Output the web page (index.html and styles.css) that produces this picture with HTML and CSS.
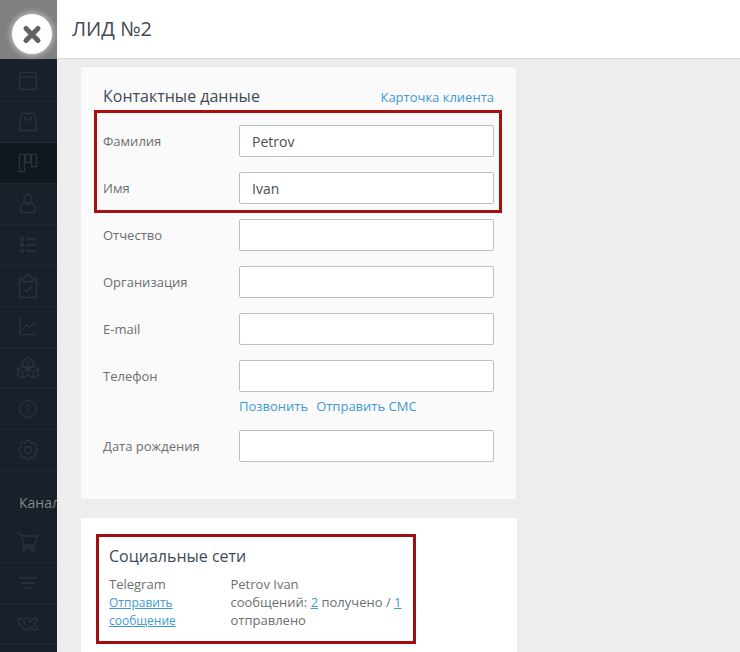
FILE: index.html
```html
<!DOCTYPE html>
<html lang="ru">
<head>
<meta charset="utf-8">
<title>ЛИД №2</title>
<link rel="stylesheet" href="styles.css">
</head>
<body>
<div class="app">
  <nav class="sidebar">
    <div class="sidebar-top">
      <button class="close" aria-label="Закрыть"><svg viewBox="0 0 40 40"><path d="M14 14.5L26 26.5M26 14.5L14 26.5"/></svg></button>
    </div>
    <a class="item"><svg viewBox="0 0 28 28"><rect x="5.5" y="5.5" width="17" height="17" rx="2"/><path d="M5.5 10H22.5"/></svg></a>
    <a class="item"><svg viewBox="0 0 28 28"><path d="M6.8 5.5H21.2L22.5 22.5H5.5ZM10.3 8C10.3 13.4 17.7 13.4 17.7 8"/></svg></a>
    <a class="item active"><svg viewBox="0 0 28 28"><path d="M5.5 5.5H10.5V22.5H5.5ZM11.5 5.5H16.5V13.5H11.5ZM17.5 5.5H22.5V17.5H17.5Z"/></svg></a>
    <a class="item"><svg viewBox="0 0 28 28"><circle cx="13.8" cy="8.5" r="4"/><path d="M10 12.8C7.5 13.5 6.5 15.5 6.5 19.5C6.5 21.5 7.5 22.5 9 22.5H18.5C20.2 22.5 21.2 21.5 21.2 19.5C21.2 15.5 20.2 13.5 17.6 12.8C15.5 14.5 12 14.5 10 12.8Z"/></svg></a>
    <a class="item"><svg viewBox="0 0 28 28"><circle cx="8" cy="8" r="1.5"/><circle cx="8" cy="14" r="1.5"/><circle cx="8" cy="20" r="1.5"/><path class="thick" d="M12 8H22M12 14H22M12 20H22"/></svg></a>
    <a class="item"><svg viewBox="0 0 28 28"><path d="M9 6.5H5.5V25.5H22.5V6.5H19M8.5 9.5V6.5L11 5.5C12 1.5 16 1.5 17 5.5L19.5 6.5V9.5ZM10 17L13 19.7L18 14"/></svg></a>
    <a class="item"><svg viewBox="0 0 28 28"><path class="thick" d="M6 5V21.5H22.5"/><path d="M9 16L12.5 12L15.5 14.5L21 9.5"/></svg></a>
    <a class="item"><svg viewBox="0 0 28 28"><path d="M14 3.5L19 6V11.5L14 14L9 11.5V6ZM9 6L14 8.5L19 6M14 8.5V14M8.5 12.5L14 15.5V21L8.5 24L3.5 21V15ZM3.5 15L8.5 18L14 15.5M8.5 18V24M19.5 12.5L24.5 15V21L19.5 24L14 21V15.5ZM14 15.5L19.5 18L24.5 15M19.5 18V24"/></svg></a>
    <a class="item"><svg viewBox="0 0 28 28"><circle cx="14" cy="14" r="8.5"/><text x="14" y="18.2">?</text></svg></a>
    <a class="item"><svg viewBox="0 0 28 28"><circle cx="14" cy="14" r="3.5"/><path d="M12 4.5H16L16.7 7.2L18.2 7.9L20.6 6.5L23 9.5L21 11.3L21.4 12.5L23.7 13V16L21 16.7L20.4 18L21.5 20.5L19 23L17 21.3L15.7 21.8L15 23.8H12.5L11.8 21.2L10.5 20.6L8 22L5.5 19.5L7 17.3L6.5 15.8L4.3 15V12.3L7 11.6L7.5 10.3L6.3 7.8L8.8 5.9L10.3 7.3L11.5 7Z"/></svg></a>
    <div class="section">Каналы</div>
    <a class="item"><svg viewBox="0 0 28 28"><path d="M3.5 5L7 5.8L10.5 19.5H21M8 8H23.5L21.3 16.5L10 17.3"/><circle cx="10.8" cy="21.3" r="1.7"/><circle cx="18.3" cy="21.3" r="1.7"/></svg></a>
    <a class="item"><svg viewBox="0 0 28 28"><path class="thick" d="M4 9H24M7 14H21M10 19H18"/></svg></a>
    <a class="item"><svg viewBox="0 0 28 28"><path d="M3.8 9.5Q3.7 8.5 5 8.5H7.5L10.7 13.8V10.5L9.8 9.2L11 8H14.5L15.5 9V12.8L18.8 8.5H23L24 9.5L19.8 14.5L24.2 18.8L23.5 20H20L16.2 17V19.5L15 20H13C8 19.5 5 14 3.8 9.5Z"/></svg></a>
    <div class="item tail"></div>
  </nav>
  <main class="main">
    <header class="header"><h1>ЛИД №2</h1></header>
    <div class="content">
      <section class="card contacts">
        <div class="card-head"><h2>Контактные данные</h2><a class="link">Карточка клиента</a></div>
        <div class="row"><label>Фамилия</label><input type="text" value="Petrov"></div>
        <div class="row"><label>Имя</label><input type="text" value="Ivan"></div>
        <div class="row"><label>Отчество</label><input type="text"></div>
        <div class="row"><label>Организация</label><input type="text"></div>
        <div class="row"><label>E-mail</label><input type="text"></div>
        <div class="row"><label>Телефон</label><input type="text"></div>
        <div class="actions"><a class="link">Позвонить</a><a class="link">Отправить СМС</a></div>
        <div class="row"><label>Дата рождения</label><input type="text"></div>
        <div class="mark"></div>
      </section>
      <section class="card social">
        <div class="social-box">
          <h2>Социальные сети</h2>
          <div class="cols">
            <div class="network">Telegram<a class="link under send">Отправить<br>сообщение</a></div>
            <div>Petrov Ivan<br>сообщений: <a class="link under">2</a> получено / <a class="link under">1</a><br>отправлено</div>
          </div>
        </div>
      </section>
    </div>
  </main>
</div>
</body>
</html>
```
FILE: styles.css
```css
* { box-sizing: border-box; }
body { margin: 0; font: 13px/18px "Open Sans", "Noto Sans", sans-serif; color: #6b6f72; }
h1, h2 { margin: 0; font-weight: 400; color: #3f4a56; }
.app { display: flex; height: 652px; overflow: hidden; background: #ededed; }

.sidebar { width: 57px; flex: none; background: #18202a; overflow: hidden; }
.sidebar-top { height: 61px; padding: 14px 0 0 12px; background: linear-gradient(#808080 59px, #18202a 59px); }
.close { display: block; width: 40px; height: 40px; padding: 0; border: 0; border-radius: 50%; background: #fff; box-shadow: 0 0 6px 1px rgba(255, 255, 255, .6); }
.close svg { display: block; width: 40px; height: 40px; fill: none; stroke: #606366; stroke-width: 5; stroke-linecap: round; }
.item { display: flex; justify-content: center; height: 41px; padding: 6px 1px 0 0; border-bottom: 1px solid #1f2730; }
.item svg { width: 28px; height: 28px; fill: none; stroke: #2a323b; stroke-width: 1.3; stroke-linejoin: round; }
.item .thick { stroke-width: 1.7; }
.item text { fill: #2a323b; stroke: none; font-size: 12px; font-weight: 600; text-anchor: middle; }
.item.active { background: #10171e; }
.item.tail { height: 10px; }
.section { height: 51px; padding: 23px 0 0 19px; font-size: 14px; white-space: nowrap; color: #858788; }

.main { flex: 1; min-width: 0; }
.header { height: 59px; padding: 15px 15px 0; background: #fff; border-bottom: 1px solid #d9d9d9; }
.header h1 { font-size: 20px; line-height: 28px; color: #414951; }
.content { padding: 7px 0 0 24px; }

.card h2 { font-size: 16px; line-height: 22px; }
.contacts { position: relative; width: 435px; height: 433px; padding: 18px 22px 0; background: #fafafa; border-top: 1px solid #e6e6e6; }
.card-head { display: flex; justify-content: space-between; align-items: baseline; height: 40px; }
.row { display: flex; align-items: center; height: 32px; margin-bottom: 15px; }
.row label { width: 136px; }
.row input { width: 255px; height: 32px; padding: 0 12px; border: 1px solid #bfbfbf; border-radius: 2px; background: #fff; font: 14px "Open Sans", sans-serif; color: #4a4e52; }
.link { color: #3d9bd1; }
.under { text-decoration: underline; }
.actions { display: flex; gap: 8px; height: 33px; margin: -10px 0 0 136px; }
.mark { position: absolute; left: 13px; top: 43px; width: 408px; height: 103px; border: 3px solid #a80f0f; }

.social { width: 436px; height: 160px; margin-top: 19px; padding: 16px 15px; background: #fff; }
.social-box { width: 320px; height: 110px; padding: 8px 10px; border: 3px solid #a00f0f; }
.cols { display: flex; margin-top: 8px; white-space: nowrap; }
.network { width: 121.5px; }
.send { display: block; padding-top: 1px; font-size: 12px; }
```
